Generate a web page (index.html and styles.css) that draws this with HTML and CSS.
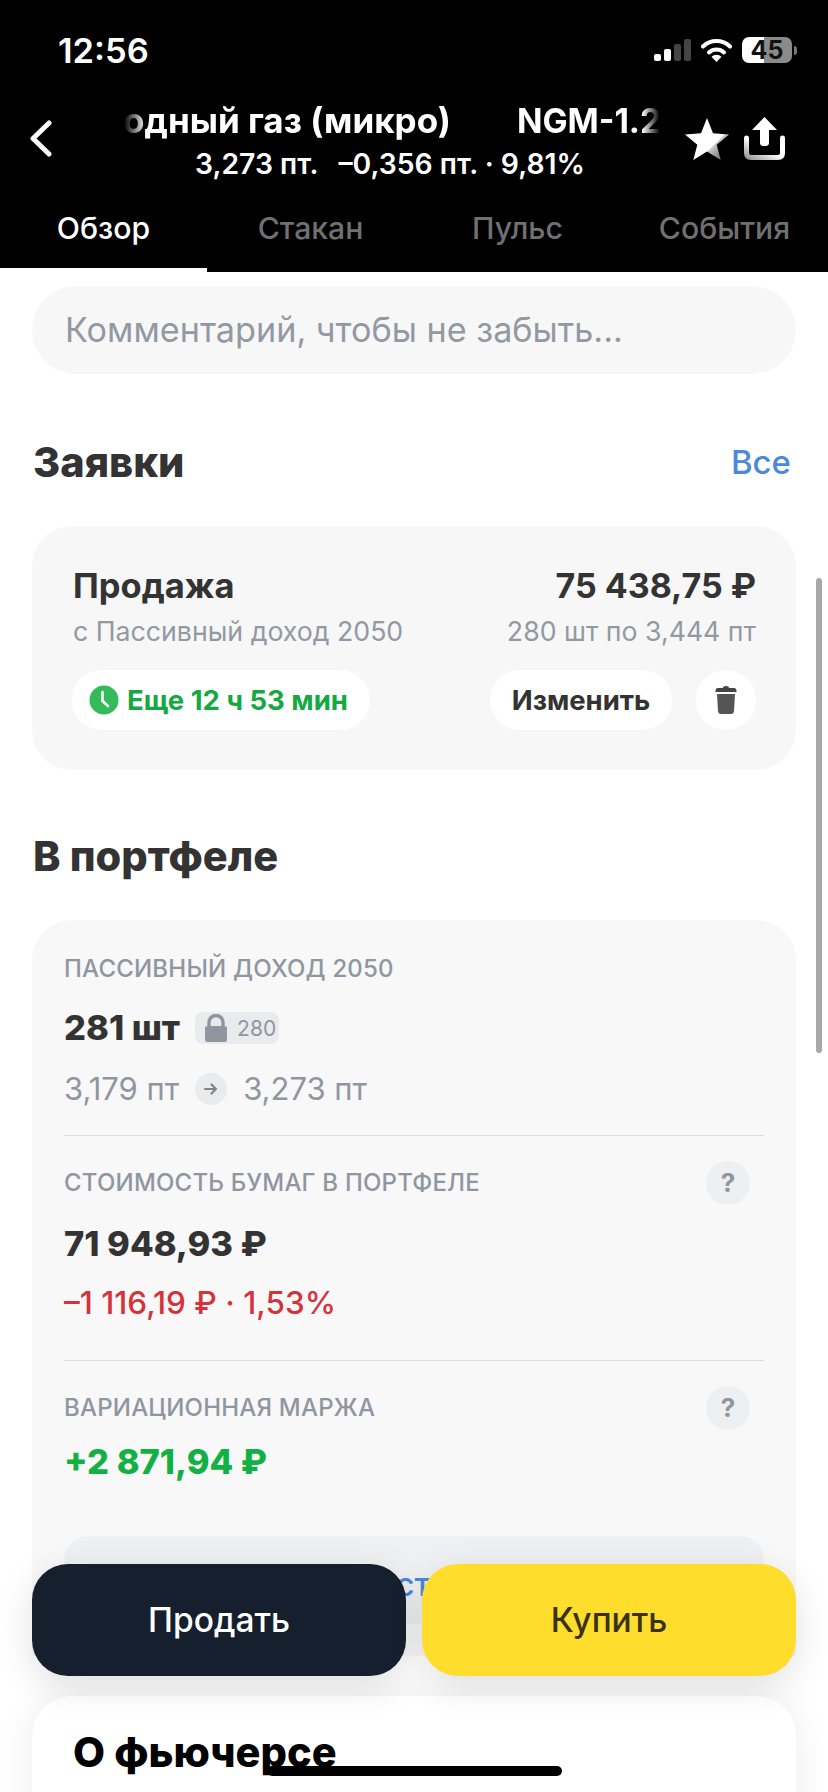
FILE: index.html
```html
<!DOCTYPE html>
<html lang="ru">
<head>
  <meta charset="UTF-8">
  <meta name="viewport" content="width=device-width, initial-scale=1.0">
  <title>NGM</title>
  <link rel="stylesheet" href="styles.css">
</head>
<body>
  <div class="screen">
    <header class="top">
      <div class="status">
        <span class="time">12:56</span>
        <div class="status-icons">
          <svg class="signal" width="37" height="22" viewBox="0 0 37 22">
            <rect x="0" y="15" width="7" height="7" rx="2" fill="#fff"/>
            <rect x="10" y="10" width="7" height="12" rx="2" fill="#fff"/>
            <rect x="20" y="5" width="7" height="17" rx="2" fill="#444"/>
            <rect x="30" y="0" width="7" height="22" rx="2" fill="#444"/>
          </svg>
          <svg class="wifi" width="31" height="24" viewBox="0 0 31 24">
            <path d="M2 8.5a19.5 19.5 0 0 1 27 0" fill="none" stroke="#fff" stroke-width="4" stroke-linecap="round"/>
            <path d="M8 14.5a11 11 0 0 1 15 0" fill="none" stroke="#fff" stroke-width="4" stroke-linecap="round"/>
            <path d="M15.5 24l-5-5.2a7 7 0 0 1 10 0z" fill="#fff"/>
          </svg>
          <div class="battery"><span>45</span></div>
          <i class="battery-nub"></i>
        </div>
      </div>

      <div class="nav">
        <svg class="back" width="23" height="37" viewBox="0 0 23 37">
          <path d="M20 3L4 18.5L20 34" fill="none" stroke="#fff" stroke-width="5" stroke-linecap="round" stroke-linejoin="round"/>
        </svg>
        <div class="nav-title">
          <div class="ticker"><div class="ticker-text">Природный газ (микро)<span class="code">NGM-1.2</span></div></div>
          <div class="quote">3,273 пт.<span class="quote-change">–0,356 пт. · 9,81%</span></div>
        </div>
        <svg class="star" width="44" height="42" viewBox="0 0 44 42">
          <defs>
            <linearGradient id="starFill" x1="0.5" y1="0.62" x2="0.85" y2="0.95">
              <stop offset="0.25" stop-color="#fff"/>
              <stop offset="0.3" stop-color="#c8c8c8"/>
              <stop offset="1" stop-color="#6e6e6e"/>
            </linearGradient>
          </defs>
          <path d="M22 0l6 15.300 16 1.100-12.300 10.300 4 15.300L22 33.500 8.300 42l4-15.300L0 16.400l16-1.100z" fill="url(#starFill)"/>
        </svg>
        <svg class="share" width="41" height="43" viewBox="0 0 41 43">
          <defs>
            <linearGradient id="shareFill" x1="0" y1="1" x2="0.5" y2="0.5">
              <stop offset="0" stop-color="#999"/>
              <stop offset="1" stop-color="#fff"/>
            </linearGradient>
          </defs>
          <path d="M20.500 0L33 13h-8v13c0 2-1.500 3-3 3h-3c-1.500 0-3-1-3-3V13H8z" fill="#fff"/>
          <path d="M2.500 21v15c0 3 1.500 4.500 4.500 4.500h27c3 0 4.500-1.500 4.500-4.500V21" fill="none" stroke="url(#shareFill)" stroke-width="5" stroke-linecap="round"/>
        </svg>
      </div>

      <nav class="tabs">
        <a class="tab tab-active">Обзор</a>
        <a class="tab">Стакан</a>
        <a class="tab">Пульс</a>
        <a class="tab">События</a>
      </nav>
    </header>

    <main class="content">
      <div class="note">Комментарий, чтобы не забыть...</div>

      <div class="section-head">
        <h2>Заявки</h2>
        <a class="link">Все</a>
      </div>

      <section class="order">
        <div class="order-row">
          <span class="order-title">Продажа</span>
          <span class="order-title order-sum">75 438,75 ₽</span>
        </div>
        <div class="order-row order-sub">
          <span>с Пассивный доход 2050</span>
          <span>280 шт по 3,444 пт</span>
        </div>
        <div class="order-row order-actions">
          <div class="pill pill-timer">
            <svg width="30" height="30" viewBox="0 0 30 30">
              <circle cx="15" cy="15" r="14.500" fill="#34b95b"/>
              <path d="M13.500 7v9l5.500 5" fill="none" stroke="#fff" stroke-width="2.600" stroke-linecap="round" stroke-linejoin="round"/>
            </svg>
            Еще 12 ч 53 мин
          </div>
          <div class="order-buttons">
            <button class="pill pill-edit">Изменить</button>
            <button class="pill pill-trash">
              <svg width="22" height="28" viewBox="0 0 22 28">
                <path d="M8 2a3 2 0 0 1 6 0h5c1.500 0 2.500 1 2.500 3v1H.5V5c0-2 1-3 2.500-3z" fill="#444"/>
                <path d="M2 8h18l-1 17c-.1 2-1.200 3-3 3H6c-1.800 0-2.900-1-3-3z" fill="#555"/>
              </svg>
            </button>
          </div>
        </div>
      </section>

      <h2 class="portfolio-title">В портфеле</h2>

      <section class="portfolio">
        <div class="block block-first">
          <div class="label">ПАССИВНЫЙ ДОХОД 2050</div>
          <div class="amount-row">
            <span class="amount">281 шт</span>
            <span class="locked">
              <svg width="24" height="28" viewBox="0 0 24 28">
                <path d="M5 13V8.500a7 7 0 0 1 14 0V13" fill="none" stroke="#8f96a0" stroke-width="3.400"/>
                <rect x="1" y="12" width="22" height="16" rx="2.500" fill="#8f96a0"/>
              </svg>
              280
            </span>
          </div>
          <div class="price-row">
            <span>3,179 пт</span>
            <i class="arrow">
              <svg width="16" height="14" viewBox="0 0 16 14">
                <path d="M2 7h11M8.500 2.500L13 7l-4.500 4.500" fill="none" stroke="#7d848e" stroke-width="2.200" stroke-linecap="round" stroke-linejoin="round"/>
              </svg>
            </i>
            <span>3,273 пт</span>
          </div>
        </div>

        <div class="block block-value">
          <div class="label-row">
            <div class="label">СТОИМОСТЬ БУМАГ В ПОРТФЕЛЕ</div>
            <i class="hint">?</i>
          </div>
          <div class="amount value">71 948,93 ₽</div>
          <div class="change">–1 116,19 ₽ · 1,53%</div>
        </div>

        <div class="block block-margin">
          <div class="label-row">
            <div class="label">ВАРИАЦИОННАЯ МАРЖА</div>
            <i class="hint">?</i>
          </div>
          <div class="amount margin">+2 871,94 ₽</div>
          <div class="more"><span>ст</span></div>
        </div>
      </section>

      <section class="about">
        <h2>О фьючерсе</h2>
      </section>
    </main>

    <i class="scrollbar"></i>

    <div class="deal">
      <button class="deal-btn deal-sell">Продать</button>
      <button class="deal-btn deal-buy">Купить</button>
    </div>

    <i class="home-bar"></i>
  </div>
</body>
</html>
```

FILE: styles.css
```css
* {
  box-sizing: border-box;
}

body {
  margin: 0;
  background: #fff;
  font-family: Inter, "Noto Sans", sans-serif;
  color: #333;
}

.screen {
  position: relative;
  width: 828px;
  height: 1792px;
  overflow: hidden;
}

.top {
  height: 272px;
  background: #000;
  color: #fff;
}

.status {
  height: 100px;
  display: flex;
  justify-content: space-between;
  align-items: center;
  padding-left: 58px;
}

.time {
  font-size: 34.500px;
  font-weight: 600;
}

.status-icons {
  display: flex;
  align-items: center;
  margin-right: 31px;
}

.wifi {
  margin-left: 10px;
}

.battery {
  width: 50px;
  height: 26px;
  margin-left: 10px;
  border-radius: 7px;
  background: linear-gradient(90deg, #fff 44%, #8a8a8a 44%);
  color: #111;
  font-size: 25px;
  font-weight: 700;
  line-height: 26px;
  text-align: center;
}

.battery-nub {
  width: 3px;
  height: 9px;
  margin-left: 2px;
  border-radius: 0 3px 3px 0;
  background: #777;
}

.nav {
  display: flex;
  align-items: flex-start;
  height: 82px;
  padding-left: 29px;
}

.back {
  flex: none;
  margin-top: 20px;
}

.nav-title {
  flex: none;
  width: 540px;
  margin-left: 68px;
  text-align: center;
}

.ticker {
  height: 40px;
  overflow: hidden;
  -webkit-mask-image: linear-gradient(90deg, transparent 4px, #000 26px, #000 522px, transparent 540px);
  mask-image: linear-gradient(90deg, transparent 4px, #000 26px, #000 522px, transparent 540px);
}

.ticker-text {
  margin-left: -89px;
  font-size: 35px;
  font-weight: 700;
  line-height: 40px;
  text-align: left;
  white-space: nowrap;
}

.code {
  margin-left: 66px;
  font-size: 33.500px;
}

.quote {
  margin-top: 6px;
  font-size: 28.300px;
  font-weight: 600;
  line-height: 36px;
}

.quote-change {
  margin-left: 20px;
}

.star {
  flex: none;
  margin: 18px 0 0 25px;
}

.share {
  flex: none;
  margin: 17px 0 0 15px;
}

.tabs {
  display: grid;
  grid-template-columns: repeat(4, 207px);
  height: 90px;
}

.tab {
  padding-top: 26px;
  color: #707070;
  font-size: 30.200px;
  font-weight: 500;
  line-height: 40px;
  text-align: center;
}

.tab-active {
  color: #fff;
  border-bottom: 4px solid #fff;
}

.content {
  padding: 14px 32px 0;
}

.note {
  height: 88px;
  padding-left: 33px;
  border-radius: 44px;
  background: #f7f7f7;
  color: #9299a2;
  font-size: 34.200px;
  line-height: 88px;
}

h2 {
  margin: 0;
  color: #333;
  font-size: 41.500px;
  font-weight: 800;
  line-height: 46px;
}

.section-head {
  display: flex;
  justify-content: space-between;
  align-items: center;
  height: 46px;
  margin: 65px 5px 0 1px;
}

.link {
  color: #4a89dc;
  font-size: 33px;
  font-weight: 500;
}

.order {
  height: 244px;
  margin-top: 41px;
  padding: 40px 40px 0 41px;
  border-radius: 40px;
  background: #f7f7f7;
}

.order-row {
  display: flex;
  justify-content: space-between;
  align-items: center;
}

.order-title {
  font-size: 34.500px;
  font-weight: 700;
  line-height: 40px;
}

.order-sum {
  font-size: 34px;
}

.order-sub {
  margin-top: 9px;
  color: #9299a2;
  font-size: 26.700px;
  line-height: 32px;
}

.order-actions {
  margin-top: 23px;
}

.pill {
  display: flex;
  align-items: center;
  height: 60px;
  border: 0;
  border-radius: 30px;
  background: #fff;
  font-family: inherit;
}

.pill-timer {
  gap: 8px;
  width: 298px;
  margin-left: -1px;
  padding-left: 17px;
  color: #16a842;
  font-size: 27.500px;
  font-weight: 700;
}

.order-buttons {
  display: flex;
  gap: 24px;
}

.pill-edit {
  justify-content: center;
  width: 182px;
  color: #333;
  font-size: 27.500px;
  font-weight: 700;
}

.pill-trash {
  justify-content: center;
  width: 60px;
  padding: 0;
}

.portfolio-title {
  margin: 63px 0 0 1px;
}

.portfolio {
  margin-top: 41px;
  padding: 0 32px;
  border-radius: 40px 40px 0 0;
  background: #f8f8f9;
}

.block-first {
  padding: 34px 0 26px;
  border-bottom: 1px solid #dcdee1;
}

.label {
  color: #90969f;
  font-size: 24px;
  font-weight: 500;
  line-height: 30px;
  letter-spacing: 0.2px;
}

.amount-row {
  display: flex;
  align-items: center;
  gap: 15px;
  margin-top: 24px;
}

.amount {
  color: #333;
  font-size: 34.500px;
  font-weight: 800;
  line-height: 40px;
}

.locked {
  display: flex;
  align-items: center;
  gap: 9px;
  width: 84px;
  height: 32px;
  padding-left: 9px;
  border-radius: 8px;
  background: #e9ebed;
  color: #90969f;
  font-size: 21px;
}

.price-row {
  display: flex;
  align-items: center;
  gap: 16px;
  margin-top: 21px;
  color: #90969f;
  font-size: 31px;
  line-height: 40px;
}

.arrow {
  display: flex;
  justify-content: center;
  align-items: center;
  width: 32px;
  height: 32px;
  border-radius: 50%;
  background: #e9ebed;
}

.label-row {
  display: flex;
  justify-content: space-between;
  align-items: center;
  height: 44px;
}

.hint {
  width: 44px;
  height: 44px;
  margin-right: 14px;
  border-radius: 50%;
  background: #edeff1;
  color: #90969f;
  font-size: 26px;
  font-style: normal;
  font-weight: 700;
  line-height: 44px;
  text-align: center;
}

.block-value {
  padding: 25px 0 37px;
  border-bottom: 1px solid #dcdee1;
}

.value {
  margin-top: 19px;
}

.change {
  margin-top: 19px;
  color: #d5333a;
  font-size: 31.500px;
  font-weight: 500;
  line-height: 40px;
}

.block-margin {
  padding: 25px 0 32px;
}

.margin {
  margin-top: 12px;
  color: #13b043;
}

.more {
  height: 88px;
  margin-top: 54px;
  border-radius: 24px;
  background: #eff0f2;
  color: #4a89dc;
  font-size: 33px;
  font-weight: 500;
  line-height: 96px;
  text-align: center;
}

.more span {
  margin-left: -2px;
}

.about {
  height: 200px;
  margin-top: 40px;
  padding: 33px 41px 0;
  border-radius: 40px 40px 0 0;
  background: #fff;
  box-shadow: 0 0 36px rgba(0, 0, 0, 0.08);
}

.about h2 {
  color: #000;
}

.scrollbar {
  position: absolute;
  top: 578px;
  left: 816px;
  width: 6px;
  height: 475px;
  border-radius: 3px;
  background: #a8a8a8;
}

.deal {
  position: absolute;
  top: 1564px;
  left: 32px;
  display: grid;
  grid-template-columns: 374px 374px;
  gap: 16px;
}

.deal-btn {
  height: 112px;
  border: 0;
  border-radius: 36px;
  font-family: inherit;
  font-size: 33.500px;
  font-weight: 500;
  box-shadow: 0 10px 36px rgba(0, 0, 0, 0.12);
}

.deal-sell {
  background: #161f2e;
  color: #fff;
}

.deal-buy {
  background: #ffdd2d;
  color: #3a3216;
}

.home-bar {
  position: absolute;
  top: 1766px;
  left: 267px;
  width: 295px;
  height: 10px;
  border-radius: 5px;
  background: #000;
}
```
